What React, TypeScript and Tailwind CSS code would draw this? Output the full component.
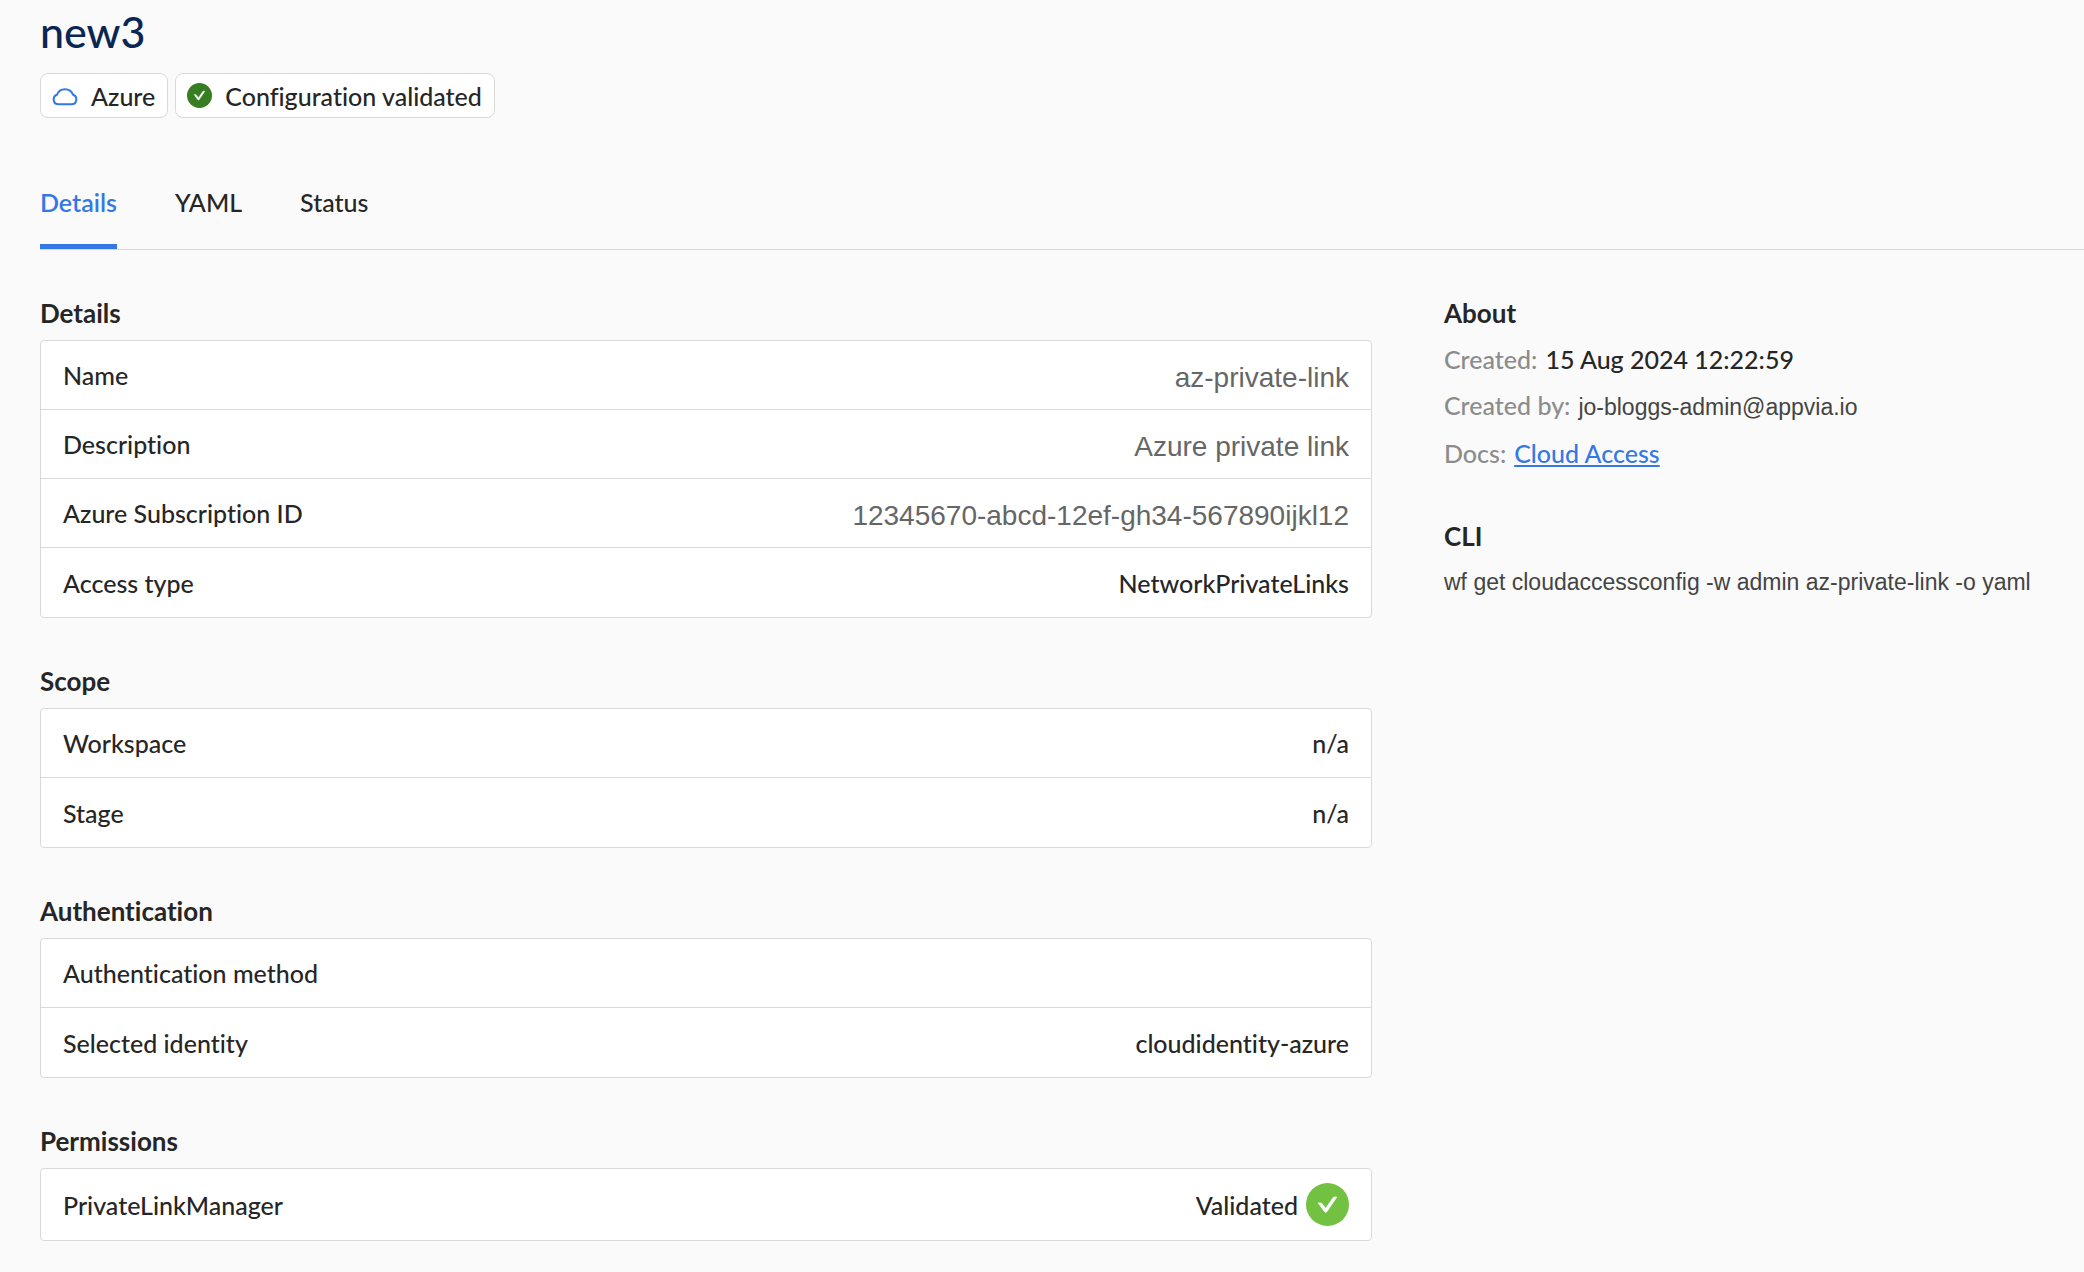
import { useState } from "react";
import type { ReactNode } from "react";

interface Row {
  label: string;
  value?: ReactNode;
}

const tabs = ["Details", "YAML", "Status"];

/** Plain user supplied value, shown in the muted sans face */
function RawValue({ children }: { children: ReactNode }) {
  return (
    <span className="block pt-[6px] font-['Liberation_Sans',sans-serif] text-[28px] font-normal leading-8 text-[#666666]">
      {children}
    </span>
  );
}

function CheckCircle({ className }: { className: string }) {
  return (
    <svg viewBox="0 0 44 44" className={className} aria-hidden="true">
      <circle cx="22" cy="22" r="22" fill="currentColor" />
      <path
        d="M12.4 20.4h2.6c.6 0 1.1.3 1.4.7l3.7 4.8 7.5-10.8c.3-.5.8-.8 1.4-.8h2.6L21.4 29.3c-.6.9-1.9.9-2.5 0Z"
        fill="#fff"
        stroke="#fff"
        strokeWidth="0.6"
      />
    </svg>
  );
}

function CloudIcon() {
  return (
    <svg viewBox="0 0 26 26" className="size-[26px] text-[#3578e5]" aria-hidden="true">
      <path
        d="M6.5 21.3h13a4.9 4.9 0 0 0 1.6-9.5 8.7 8.7 0 0 0-16.2 0 4.9 4.9 0 0 0 1.6 9.5Z"
        fill="none"
        stroke="currentColor"
        strokeWidth="2"
        strokeLinejoin="round"
      />
    </svg>
  );
}

function Badge({ icon, children }: { icon: ReactNode; children: ReactNode }) {
  return (
    <span className="flex h-[45px] items-center gap-[13px] rounded-lg border border-[#d9d9d9] bg-white pl-[11px] pr-3">
      {icon}
      {children}
    </span>
  );
}

function Section({ title, rows }: { title: string; rows: Row[] }) {
  return (
    <section>
      <h2 className="mb-[7px] text-[26px] font-bold leading-10">{title}</h2>
      <dl className="divide-y divide-[#d9d9d9] rounded-sm border border-[#d9d9d9] bg-white">
        {rows.map((row) => (
          <div
            key={row.label}
            className="flex min-h-[69px] items-center justify-between gap-6 py-[14px] pl-[22px] pr-[22px]"
          >
            <dt>{row.label}</dt>
            <dd>{row.value}</dd>
          </div>
        ))}
      </dl>
    </section>
  );
}

export default function App() {
  const [active, setActive] = useState("Details");

  return (
    <div className="min-h-screen bg-[#fafafa] pl-10 font-[Lato,sans-serif] text-[25px] font-medium leading-10 text-[#262626] [font-variant-ligatures:none]">
      <header>
        <h1 className="pt-1 text-[43px] leading-[55px] text-[#0a2653]">new3</h1>
        <div className="mt-[14px] flex gap-[7px]">
          <Badge icon={<CloudIcon />}>Azure</Badge>
          <Badge icon={<CheckCircle className="size-[25px] text-[#377d22]" />}>
            Configuration validated
          </Badge>
        </div>
      </header>

      <div role="tablist" className="mt-16 flex gap-[58px] border-b border-[#d9d9d9]">
        {tabs.map((tab) => (
          <button
            key={tab}
            type="button"
            role="tab"
            aria-selected={tab === active}
            onClick={() => setActive(tab)}
            className={
              tab === active
                ? "border-b-[5px] border-[#3578e5] pb-[22px] font-semibold text-[#3578e5]"
                : "border-b-[5px] border-transparent pb-[22px]"
            }
          >
            {tab}
          </button>
        ))}
      </div>

      <div className="flex gap-[72px] pt-[43px]">
        <main className="flex min-w-0 flex-1 flex-col gap-[43px] pb-8">
          <Section
            title="Details"
            rows={[
              { label: "Name", value: <RawValue>az-private-link</RawValue> },
              { label: "Description", value: <RawValue>Azure private link</RawValue> },
              {
                label: "Azure Subscription ID",
                value: <RawValue>12345670-abcd-12ef-gh34-567890ijkl12</RawValue>,
              },
              { label: "Access type", value: "NetworkPrivateLinks" },
            ]}
          />
          <Section
            title="Scope"
            rows={[
              { label: "Workspace", value: "n/a" },
              { label: "Stage", value: "n/a" },
            ]}
          />
          <Section
            title="Authentication"
            rows={[
              { label: "Authentication method" },
              { label: "Selected identity", value: "cloudidentity-azure" },
            ]}
          />
          <Section
            title="Permissions"
            rows={[
              {
                label: "PrivateLinkManager",
                value: (
                  <span className="flex items-center gap-2">
                    Validated
                    <CheckCircle className="size-[43px] text-[#72c140]" />
                  </span>
                ),
              },
            ]}
          />
        </main>

        <aside className="w-[640px] shrink-0">
          <h2 className="text-[26px] font-bold leading-10">About</h2>
          <dl className="mt-[6px] flex flex-col gap-[6px]">
            <div className="flex items-baseline gap-2">
              <dt className="text-[#8c8c8c]">Created:</dt>
              <dd>15 Aug 2024 12:22:59</dd>
            </div>
            <div className="flex items-baseline gap-2">
              <dt className="text-[#8c8c8c]">Created by:</dt>
              <dd className="font-['Liberation_Sans',sans-serif] text-[23px] font-normal text-[#444444]">
                jo-bloggs-admin@appvia.io
              </dd>
            </div>
            <div className="flex items-baseline gap-2">
              <dt className="text-[#8c8c8c]">Docs:</dt>
              <dd>
                <a href="#cloud-access" className="text-[#3578e5] underline">
                  Cloud Access
                </a>
              </dd>
            </div>
          </dl>

          <h2 className="mt-[43px] text-[26px] font-bold leading-10">CLI</h2>
          <code className="mt-[6px] block font-['Liberation_Sans',sans-serif] text-[23px] font-normal text-[#444444]">
            wf get cloudaccessconfig -w admin az-private-link -o yaml
          </code>
        </aside>
      </div>
    </div>
  );
}
